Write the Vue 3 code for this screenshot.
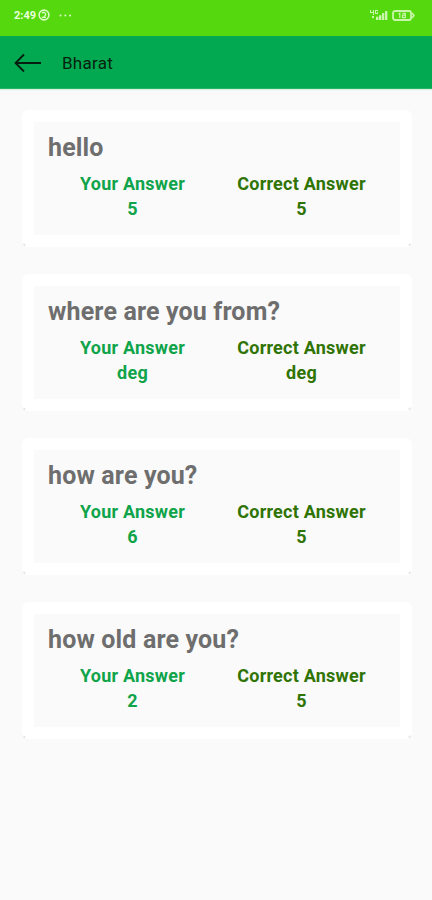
<script setup>
const results = [
  { question: 'hello', answer: '5', correct: '5' },
  { question: 'where are you from?', answer: 'deg', correct: 'deg' },
  { question: 'how are you?', answer: '6', correct: '5' },
  { question: 'how old are you?', answer: '2', correct: '5' },
]
</script>

<template>
  <div class="screen">
    <div class="status">
      <div class="status-left">
        <span class="time">2:49</span>
        <svg class="whats" width="12" height="12" viewBox="0 0 12 12" fill="none" stroke="#dcfbc8">
          <circle cx="6" cy="6" r="4.9" stroke-width="1.6" />
          <path d="M3.8 4.1C5 3 8 3.6 7.8 5.5C7.7 6.7 6 6.8 6.1 8M3.8 8.4h4" stroke-width="1.3" />
        </svg>
        <svg width="13" height="3" viewBox="0 0 13 3" fill="#dcfbc8">
          <circle cx="1.5" cy="1.5" r="1" /><circle cx="6.3" cy="1.5" r="1" /><circle cx="11.1" cy="1.5" r="1" />
        </svg>
      </div>
      <div class="status-right">
        <svg width="19" height="12" viewBox="0 0 19 12" fill="#c9f6ac">
          <path d="M1 1h1v2h2V1h1v5H4V4H1zM6 1h3v1H7v2h1V3h1v2H6zM3 7h2v2H3z" />
          <path d="M7 7.8h2.4V11H7zM10 6.2h2.4V11H10zM13 4h2.3v7H13zM16 2h2.4v9H16z" />
        </svg>
        <svg width="23" height="11" viewBox="0 0 23 11" fill="none" stroke="#c9f6ac">
          <rect x="1" y="1" width="18" height="9" rx="2" stroke-width="1.8" />
          <path d="M20 3l2 2.5L20 8" stroke-width="1.6" />
          <path d="M6.5 4l1.3-.7V8M10.5 3.4h2.8v1.8h-2.8v2.4h2.8V5.2" stroke-width="1.2" />
        </svg>
      </div>
    </div>
    <header class="bar">
      <svg class="back" width="28" height="20" viewBox="0 0 28 20" fill="none" stroke="#071d10" stroke-width="1.8">
        <path d="M27 10H2M10 1.5L1.5 10L10 18.5" />
      </svg>
      <span class="title">Bharat</span>
    </header>
    <main class="list">
      <section v-for="r in results" :key="r.question" class="card">
        <div class="inner">
          <h2>{{ r.question }}</h2>
          <div class="cols">
            <div class="col yours"><span>Your Answer</span><span>{{ r.answer }}</span></div>
            <div class="col correct"><span>Correct Answer</span><span>{{ r.correct }}</span></div>
          </div>
        </div>
      </section>
    </main>
  </div>
</template>

<style>
body { background: #fafafa; }
</style>

<style scoped>
.screen {
  box-sizing: border-box;
  height: 900px;
  overflow: hidden;
  background: #fafafa;
  font-family: Roboto, sans-serif;
}
.status {
  height: 36px;
  box-sizing: border-box;
  padding: 0 17px 6px 14px;
  display: flex;
  align-items: center;
  justify-content: space-between;
  background: #55d90e;
}
.status-left, .status-right { display: flex; align-items: center; }
.time { font-size: 11px; font-weight: 700; color: #ebffdd; width: 24px; padding-top: 1px; }
.whats { margin-right: 9px; }
.status-right { gap: 4px; }
.bar {
  height: 53px;
  box-sizing: border-box;
  padding-left: 14px;
  display: flex;
  align-items: center;
  gap: 20px;
  background: #03a950;
  border-bottom: 1px solid #24b567;
  box-shadow: 0 1px 1px #d5f0e0;
}
.back { margin-top: 2px; }
.title { font-size: 17px; letter-spacing: 0.25px; color: #08210f; line-height: 20px; padding-top: 2px; }
.list {
  padding: 21px 20px 0 22px;
  display: flex;
  flex-direction: column;
  gap: 27px;
}
.card {
  height: 137px;
  box-sizing: border-box;
  padding: 12px;
  border-radius: 6px;
  background:
    radial-gradient(circle at 2px 135px, #d8d8d8 0, transparent 2px),
    radial-gradient(circle at 388px 135px, #d8d8d8 0, transparent 2px),
    #fff;
}
.inner {
  height: 113px;
  box-sizing: border-box;
  padding: 11px 14px 0;
  background: #fafafa;
}
h2 { margin: 0; font-size: 25px; letter-spacing: 0.15px; line-height: 30px; font-weight: 700; color: #6e6e6e; white-space: nowrap; }
.cols { display: flex; margin-top: 9px; }
.col {
  flex: 1 1 0;
  display: flex;
  flex-direction: column;
  align-items: center;
  font-size: 18px;
  letter-spacing: 0.23px;
  font-weight: 700;
  line-height: 24.8px;
  white-space: nowrap;
}
.yours { color: #0fa44a; }
.correct { color: #2f7405; }
</style>
